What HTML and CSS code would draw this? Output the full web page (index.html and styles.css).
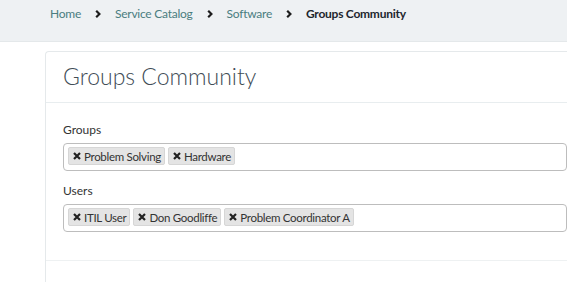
FILE: index.html
```html
<!DOCTYPE html>
<html>
<head>
  <title>Groups Community</title>
  <link rel="stylesheet" href="styles.css">
</head>
<body>
  <div class="crumbs">
    <a href="#">Home</a>
    <svg class="chev" viewBox="0 0 6 8"><polyline points="1.2,0.8 4.4,4 1.2,7.2"/></svg>
    <a href="#">Service Catalog</a>
    <svg class="chev" viewBox="0 0 6 8"><polyline points="1.2,0.8 4.4,4 1.2,7.2"/></svg>
    <a href="#">Software</a>
    <svg class="chev" viewBox="0 0 6 8"><polyline points="1.2,0.8 4.4,4 1.2,7.2"/></svg>
    <span class="current">Groups Community</span>
  </div>

  <div class="main">
    <div class="panel">
      <div class="panel-heading">
        <h2>Groups Community</h2>
      </div>
      <div class="panel-body">
        <div class="field">
          <label>Groups</label>
          <div class="picker">
            <span class="tag"><svg class="x" viewBox="0 0 8 8"><path d="M1,1 L7,7 M7,1 L1,7"/></svg>Problem Solving</span>
            <span class="tag"><svg class="x" viewBox="0 0 8 8"><path d="M1,1 L7,7 M7,1 L1,7"/></svg>Hardware</span>
          </div>
        </div>
        <div class="field">
          <label>Users</label>
          <div class="picker">
            <span class="tag"><svg class="x" viewBox="0 0 8 8"><path d="M1,1 L7,7 M7,1 L1,7"/></svg>ITIL User</span>
            <span class="tag"><svg class="x" viewBox="0 0 8 8"><path d="M1,1 L7,7 M7,1 L1,7"/></svg>Don Goodliffe</span>
            <span class="tag"><svg class="x" viewBox="0 0 8 8"><path d="M1,1 L7,7 M7,1 L1,7"/></svg>Problem Coordinator A</span>
          </div>
        </div>
      </div>
      <div class="panel-footer"></div>
    </div>
  </div>
</body>
</html>
```

FILE: styles.css
```css
body {
  margin: 0;
  font-family: Lato, "Open Sans", sans-serif;
  background-color: #fff;
  color: #333;
}

/* fil d'ariane */
.crumbs {
  height: 42px;
  box-sizing: border-box;
  padding: 6px 0 0 50px;
  background-color: #eef1f3;
  border-bottom: 1px solid #e4e8ea;
  display: flex;
  align-items: flex-start;
  font-size: 12px;
  letter-spacing: -0.25px;
  line-height: 16px;
}
.crumbs a {
  color: #4a7d80;
  text-decoration: none;
}
.chev {
  width: 6px;
  height: 8px;
  margin: 4px 14px 0 14px;
  fill: none;
  stroke: #1d1d1d;
  stroke-width: 2.2;
}
.current {
  font-weight: bold;
  color: #1d262d;
}

.main {
  padding: 9px 0 0 45px;
}
.panel {
  border: 1px solid #e5e9eb;
  border-right: none;
  border-radius: 4px 0 0 0;
  height: 240px;
  background-color: #fff;
}
.panel-heading {
  height: 51px;
  box-sizing: border-box;
  border-bottom: 1px solid #e8edef;
  padding: 7px 0 0 17px;
}
.panel-heading h2 {
  margin: 0;
  font-size: 23px;
  font-weight: 300;
  color: #414c56;
  line-height: 34px;
}
.panel-body {
  padding: 19px 0 0 17px;
  height: 158px;
  box-sizing: border-box;
  border-bottom: 1px solid #eef1f2;
}
.field {
  margin-bottom: 12px;
}
.field label {
  display: block;
  font-size: 12px;
  color: #333;
  line-height: 16px;
  margin-bottom: 5px;
}
.picker {
  border: 1px solid #bdbdbd;
  border-radius: 4px;
  height: 28px;
  box-sizing: border-box;
  padding: 3px 4px;
  display: flex;
  gap: 3px;
}
.tag {
  display: flex;
  align-items: center;
  background-color: #e4e4e4;
  border: 1px solid #d6d6d6;
  border-radius: 2px;
  padding: 0 3px 0 4px;
  font-size: 11.5px;
  letter-spacing: -0.3px;
  color: #333;
  height: 18px;
  box-sizing: border-box;
}
.x {
  width: 8px;
  height: 8px;
  margin-right: 3px;
  stroke: #222;
  stroke-width: 2.2;
}
```
